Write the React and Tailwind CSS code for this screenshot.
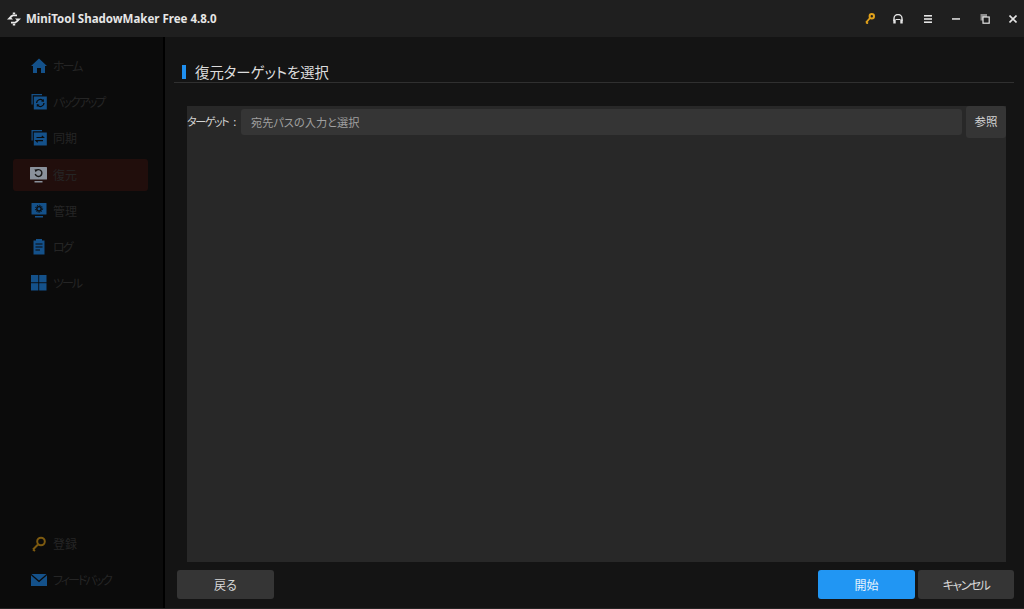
import React from 'react';

const FONT = "font-['Noto_Sans_CJK_JP','Noto_Sans',sans-serif] [font-feature-settings:'palt']";

const HomeIcon = () => (
  <svg width="16" height="16" viewBox="0 0 16 16" fill="#14518a">
    <path d="M8 0.5 L16 8 L14 8 L14 15 L10 15 L10 10 L6 10 L6 15 L2 15 L2 8 L0 8 Z" />
  </svg>
);

const BackupIcon = ({ sync }) => (
  <svg width="16" height="16" viewBox="0 0 16 16">
    <path d="M0.5 0 H11 V1.2 H1.7 V10.5 H0.5 Z" fill="#14518a" />
    <rect x="2.8" y="2.5" width="13" height="13" fill="#14518a" />
    {sync ? (
      <path d="M5.5 7.5 H12.5 L10.8 5.8 M12 10.7 H5 L6.7 12.4" stroke="#0b0b0b" strokeWidth="1.2" fill="none" />
    ) : (
      <>
        <path d="M5.6 9 A3.6 3.6 0 0 1 11.8 6.6 M13 9 A3.6 3.6 0 0 1 6.8 11.4" stroke="#0b0b0b" strokeWidth="1.3" fill="none" />
        <path d="M12.8 5 L12.8 8 L10 7.2 Z M5.8 13 L5.8 10 L8.6 10.8 Z" fill="#0b0b0b" />
      </>
    )}
  </svg>
);

const RestoreIcon = () => (
  <svg width="17" height="16" viewBox="0 0 17 16">
    <rect x="0" y="0" width="17" height="12.5" rx="0.5" fill="#8a919b" />
    <rect x="4.5" y="14" width="8" height="1.5" fill="#8a919b" />
    <path d="M5.9 3.8 A3.4 3.4 0 1 1 5.2 7" stroke="#171717" strokeWidth="1.4" fill="none" />
    <path d="M4.5 2.2 L7.7 2.8 L5.5 5.2 Z" fill="#171717" />
  </svg>
);

const ManageIcon = () => (
  <svg width="16" height="16" viewBox="0 0 16 16">
    <rect x="0.5" y="0" width="15" height="11.5" rx="0.5" fill="#14518a" />
    <rect x="4" y="13" width="8" height="1.5" fill="#14518a" />
    <circle cx="8" cy="5.8" r="2.2" fill="none" stroke="#0b0b0b" strokeWidth="1.4" />
    <circle cx="8" cy="5.8" r="3.6" fill="none" stroke="#0b0b0b" strokeWidth="1" strokeDasharray="1.2 1.2" />
  </svg>
);

const LogIcon = () => (
  <svg width="16" height="16" viewBox="0 0 16 16">
    <path d="M2.5 1.5 H5 V0 H11 V1.5 H13.5 V15.5 H2.5 Z" fill="#14518a" />
    <path d="M4.5 5 H11.5 M4.5 8 H11.5 M4.5 11 H9" stroke="#0b0b0b" strokeWidth="1.1" />
  </svg>
);

const ToolsIcon = () => (
  <svg width="16" height="16" viewBox="0 0 16 16" fill="#14518a">
    <rect x="0" y="0" width="7.3" height="7.3" />
    <rect x="8.2" y="0" width="7.3" height="7.3" />
    <rect x="0" y="8.2" width="7.3" height="7.3" />
    <rect x="8.2" y="8.2" width="7.3" height="7.3" />
  </svg>
);

const KeyIcon = () => (
  <svg width="16" height="16" viewBox="0 0 16 16" fill="none" stroke="#7d5a10" strokeWidth="2">
    <circle cx="10" cy="5.5" r="3.8" />
    <path d="M7 8.5 L2 13.5 M2 13.5 L4 15" />
  </svg>
);

const MailIcon = () => (
  <svg width="16" height="13" viewBox="0 0 16 13">
    <path d="M0.5 0 H15.5 L8 6.5 Z" fill="#14518a" />
    <path d="M0 1.2 L8 8.2 L16 1.2 V12 H0 Z" fill="#14518a" />
  </svg>
);

const Logo = () => (
  <svg width="14" height="14" viewBox="0 0 14 14" fill="none" stroke="#e8e8e8" strokeWidth="1.7">
    <path d="M5.8 0.4 H8.2 V2.2 H5.8 Z M5.8 11.8 H8.2 V13.6 H5.8 Z" fill="#e8e8e8" stroke="none" />
    <path d="M3 6.5 A4.2 4.2 0 0 1 6 3.4 H10" />
    <path d="M11 7.5 A4.2 4.2 0 0 1 8 10.6 H4" />
    <path d="M0 7.4 L3 4.4 L6 7.4 Z" fill="#e8e8e8" stroke="none" />
    <path d="M14 6.6 L11 9.6 L8 6.6 Z" fill="#e8e8e8" stroke="none" />
  </svg>
);

const TitleKey = () => (
  <svg width="10" height="11" viewBox="0 0 10 11" fill="none">
    <circle cx="6.8" cy="3.2" r="2.2" stroke="#e0a11b" strokeWidth="2" />
    <path d="M5 5 L1 9.6 M1.2 9.4 L3 10.6" stroke="#e0a11b" strokeWidth="1.8" />
  </svg>
);

const TitleHeadset = () => (
  <svg width="10" height="10" viewBox="0 0 10 10" fill="none">
    <path d="M1 7 V4.5 A4 4 0 0 1 9 4.5 V7" stroke="#e4e4e4" strokeWidth="1.4" />
    <rect x="0.3" y="5.5" width="2.4" height="4" fill="#e4e4e4" />
    <rect x="7.3" y="5.5" width="2.4" height="4" fill="#e4e4e4" />
    <path d="M2.7 5.5 H7.3" stroke="#e4e4e4" strokeWidth="1" />
  </svg>
);

const TitleMenu = () => (
  <svg width="9" height="8" viewBox="0 0 9 8" fill="#e4e4e4">
    <rect y="0" width="8" height="1.6" />
    <rect y="3.2" width="8" height="1.6" />
    <rect y="6.4" width="8" height="1.6" />
  </svg>
);

const TitleMinus = () => (
  <svg width="8" height="8" viewBox="0 0 8 8" fill="#e4e4e4">
    <rect y="3.2" width="8" height="1.5" />
  </svg>
);

const TitleRestore = () => (
  <svg width="10" height="10" viewBox="0 0 10 10">
    <rect x="0.5" y="0" width="6.5" height="6.5" fill="#8d8d8d" />
    <rect x="3" y="3" width="6.2" height="6.2" fill="#1f1f1f" stroke="#e4e4e4" strokeWidth="1.2" />
  </svg>
);

const TitleClose = () => (
  <svg width="8" height="8" viewBox="0 0 8 8" stroke="#e4e4e4" strokeWidth="1.6">
    <path d="M0.5 0.5 L7.5 7.5 M7.5 0.5 L0.5 7.5" />
  </svg>
);

const NAV = [
  { label: 'ホーム', icon: HomeIcon, kana: true },
  { label: 'バックアップ', icon: BackupIcon, kana: true },
  { label: '同期', icon: () => <BackupIcon sync /> },
  { label: '復元', icon: RestoreIcon, active: true },
  { label: '管理', icon: ManageIcon },
  { label: 'ログ', icon: LogIcon, kana: true },
  { label: 'ツール', icon: ToolsIcon, kana: true },
];

const NavItem = ({ item }) => {
  const Icon = item.icon;
  return (
    <div className={`flex h-[32px] items-center gap-[6px] rounded-[3px] pl-[17px] text-[12px] text-[#252525] ${item.active ? 'bg-[#210e0c]' : ''}`}>
      <span className="flex w-[17px] justify-center"><Icon /></span>
      <span className={item.kana ? 'tracking-[-2px]' : ''}>{item.label}</span>
    </div>
  );
};

export default function App() {
  return (
    <div className={`flex h-[609px] w-[1024px] flex-col overflow-hidden border-b border-[#242424] bg-[#141414] ${FONT}`}>
      <header className="flex h-[37px] shrink-0 items-center justify-between bg-[#1f1f1f] pl-[7px] pr-[7px]">
        <div className="flex items-center gap-[5px] font-['Noto_Sans'] text-[11.5px] font-bold text-[#e6e6e6]">
          <Logo />
          <span>MiniTool ShadowMaker Free 4.8.0</span>
        </div>
        <div className="flex items-center">
          <TitleKey />
          <span className="w-[18px]" />
          <TitleHeadset />
          <span className="w-[21px]" />
          <TitleMenu />
          <span className="w-[19px]" />
          <TitleMinus />
          <span className="w-[20px]" />
          <TitleRestore />
          <span className="w-[19px]" />
          <TitleClose />
        </div>
      </header>

      <div className="flex min-h-0 flex-1">
        <aside className="flex w-[163px] shrink-0 flex-col justify-between bg-[#0b0b0b] pb-[12px] pl-[13px] pr-[15px] pt-[13px]">
          <nav className="flex flex-col gap-[4.2px]">
            {NAV.map((item) => (
              <NavItem key={item.label} item={item} />
            ))}
          </nav>
          <div className="flex flex-col gap-[4.5px]">
            <NavItem item={{ label: '登録', icon: KeyIcon }} />
            <NavItem item={{ label: 'フィードバック', icon: MailIcon, kana: true }} />
          </div>
        </aside>
        <div className="w-[2px] shrink-0 bg-black" />

        <main className="flex min-w-0 flex-1 flex-col pl-[9px] pr-[10px]">
          <div className="mt-[25px] flex h-[21px] items-center gap-[9px] border-b border-[#303030] pl-[8px]">
            <span className="h-[14px] w-[4px] bg-[#1f8fef]" />
            <h1 className="text-[14.4px] font-normal leading-[20px] text-[#dcdcdc]">復元ターゲットを選択</h1>
          </div>

          <section className="ml-[13px] mr-[8px] mt-[23px] h-[456px] bg-[#282828]">
            <div className="flex items-start">
              <label className="mt-[7px] w-[54px] whitespace-nowrap text-[11px] leading-[17px] tracking-[-1.4px] text-[#d4d4d4]">ターゲット<span className="ml-[5px]">:</span></label>
              <div className="mt-[3px] flex h-[26px] flex-1 items-center rounded-[3px] bg-[#353535] pl-[10px] text-[11.2px] text-[#a0a0a0]">
                宛先パスの入力と選択
              </div>
              <button className="ml-[4px] h-[32px] w-[40px] rounded-[3px] bg-[#353535] text-[11.5px] text-[#d4d4d4]">参照</button>
            </div>
          </section>

          <footer className="mt-[8px] flex items-start justify-between pl-[3px]">
            <button className="h-[29px] w-[97px] rounded-[3px] bg-[#353535] text-[12px] text-[#d8d8d8]">戻る</button>
            <div className="flex gap-[3px]">
              <button className="h-[29px] w-[97px] rounded-[3px] bg-[#2196f3] text-[12px] text-[#e8f3fd]">開始</button>
              <button className="h-[29px] w-[96px] rounded-[3px] bg-[#353535] text-[12px] tracking-[-1.5px] text-[#d8d8d8]">キャンセル</button>
            </div>
          </footer>
        </main>
      </div>
    </div>
  );
}
